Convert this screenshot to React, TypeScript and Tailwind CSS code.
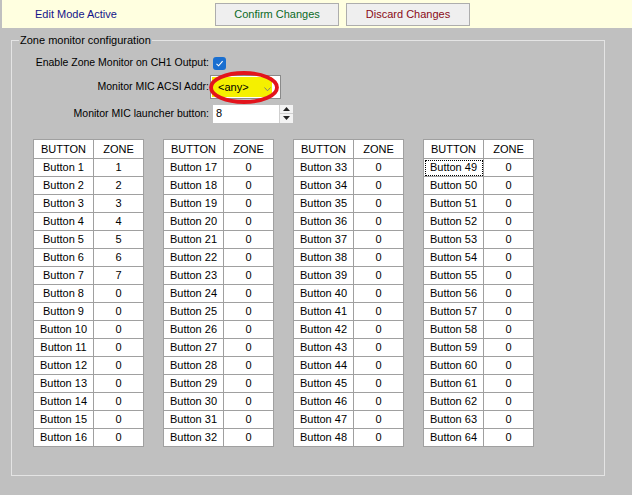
import React from "react";

const tables = [0, 1, 2, 3].map((t) =>
  Array.from({ length: 16 }, (_, i) => ({
    n: t * 16 + i + 1,
    z: t === 0 && i < 7 ? i + 1 : 0,
  }))
);

const ZoneTable: React.FC<{ rows: { n: number; z: number }[] }> = ({ rows }) => (
  <div className="grid grid-cols-[60px_50px] border-l border-t border-[#a0a0a0] bg-white w-fit">
    <div className="h-[19px] flex items-center justify-center border-r border-b border-[#a0a0a0]">BUTTON</div>
    <div className="h-[19px] flex items-center justify-center border-r border-b border-[#a0a0a0]">ZONE</div>
    {rows.map((r) => (
      <React.Fragment key={r.n}>
        <div className="h-[18px] flex items-center justify-center border-r border-b border-[#a0a0a0]">
          {r.n === 49 ? (
            <span className="w-[58px] h-[16px] flex items-center justify-center border border-dotted border-black">
              Button {r.n}
            </span>
          ) : (
            <>Button {r.n}</>
          )}
        </div>
        <div className="h-[18px] flex items-center justify-center border-r border-b border-[#a0a0a0]">{r.z}</div>
      </React.Fragment>
    ))}
  </div>
);

export default function App() {
  return (
    <div className="w-[632px] h-[495px] bg-[#c0c0c0] font-['Liberation_Sans',Arial,sans-serif] text-[11px] text-black overflow-hidden">
      <div className="h-[28px] ml-[2px] bg-[#ffffe0] flex items-center">
        <div className="w-[213px] pl-[33px] text-[#14148a]">Edit Mode Active</div>
        <button className="w-[124px] h-[23px] border border-[#adadad] bg-[#efefef] text-[#0b6a1f]">
          Confirm Changes
        </button>
        <button className="ml-[7px] w-[124px] h-[23px] border border-[#adadad] bg-[#efefef] text-[#8a0a16]">
          Discard Changes
        </button>
      </div>

      <div className="relative mt-[12px] ml-[11px] w-[594px] h-[436px] border border-[#e4e4e4]">
        <span className="absolute -top-[8px] left-[7px] px-[1px] bg-[#c0c0c0] leading-[14px]">
          Zone monitor configuration
        </span>

        <div className="pt-[9px] flex flex-col text-[10.5px]">
          <div className="h-[26px] flex items-center">
            <div className="w-[198px] text-right pr-[1px]">Enable Zone Monitor on CH1 Output:</div>
            <div className="ml-[3px] w-[13px] h-[13px] rounded-[3px] bg-[#1a6fd0] flex items-center justify-center">
              <svg width="9" height="9" viewBox="0 0 9 9" fill="none">
                <path d="M1.5 4.8 L3.6 6.8 L7.6 2.2" stroke="white" strokeWidth="1.1" />
              </svg>
            </div>
          </div>

          <div className="h-[22px] flex items-center">
            <div className="w-[198px] text-right pr-[1px]">Monitor MIC ACSI Addr:</div>
            <div className="relative w-[71px] h-[24px] bg-white border border-[#8a8a8a] p-[1px] pr-[8px] text-[11px]">
              <div className="h-full bg-[#f5f000] flex items-center pl-[6px] relative">
                &lt;any&gt;
                <svg className="absolute right-[1px] top-[10px]" width="7" height="5" viewBox="0 0 7 5" fill="none">
                  <path d="M0.5 0.5 L3.5 3.8 L6.5 0.5" stroke="#777" strokeWidth="0.9" />
                </svg>
              </div>
              <svg className="absolute -left-[2px] -top-[5px]" width="71" height="33" viewBox="0 0 71 33" fill="none">
                <ellipse cx="35" cy="16.5" rx="33" ry="14.5" stroke="#e3141c" strokeWidth="3.8" />
              </svg>
            </div>
          </div>

          <div className="h-[31px] flex items-center">
            <div className="w-[198px] text-right pr-[1px]">Monitor MIC launcher button:</div>
            <div className="ml-[3px] w-[80px] h-[18px] bg-white flex text-[11px]">
              <div className="flex-1 flex items-center pl-[3px]">8</div>
              <div className="w-[14px] flex flex-col border-l border-[#cfcfcf] bg-[#f3f3f3]">
                <div className="flex-1 flex items-center justify-center border-b border-[#cfcfcf]">
                  <svg width="7" height="4" viewBox="0 0 7 4">
                    <path d="M0 4 L3.5 0 L7 4 Z" fill="#222" />
                  </svg>
                </div>
                <div className="flex-1 flex items-center justify-center">
                  <svg width="7" height="4" viewBox="0 0 7 4">
                    <path d="M0 0 L3.5 4 L7 0 Z" fill="#222" />
                  </svg>
                </div>
              </div>
            </div>
          </div>

          <div className="mt-[10px] ml-[21px] flex gap-[19px] text-[11px]">
            {tables.map((rows, i) => (
              <ZoneTable key={i} rows={rows} />
            ))}
          </div>
        </div>
      </div>
    </div>
  );
}
